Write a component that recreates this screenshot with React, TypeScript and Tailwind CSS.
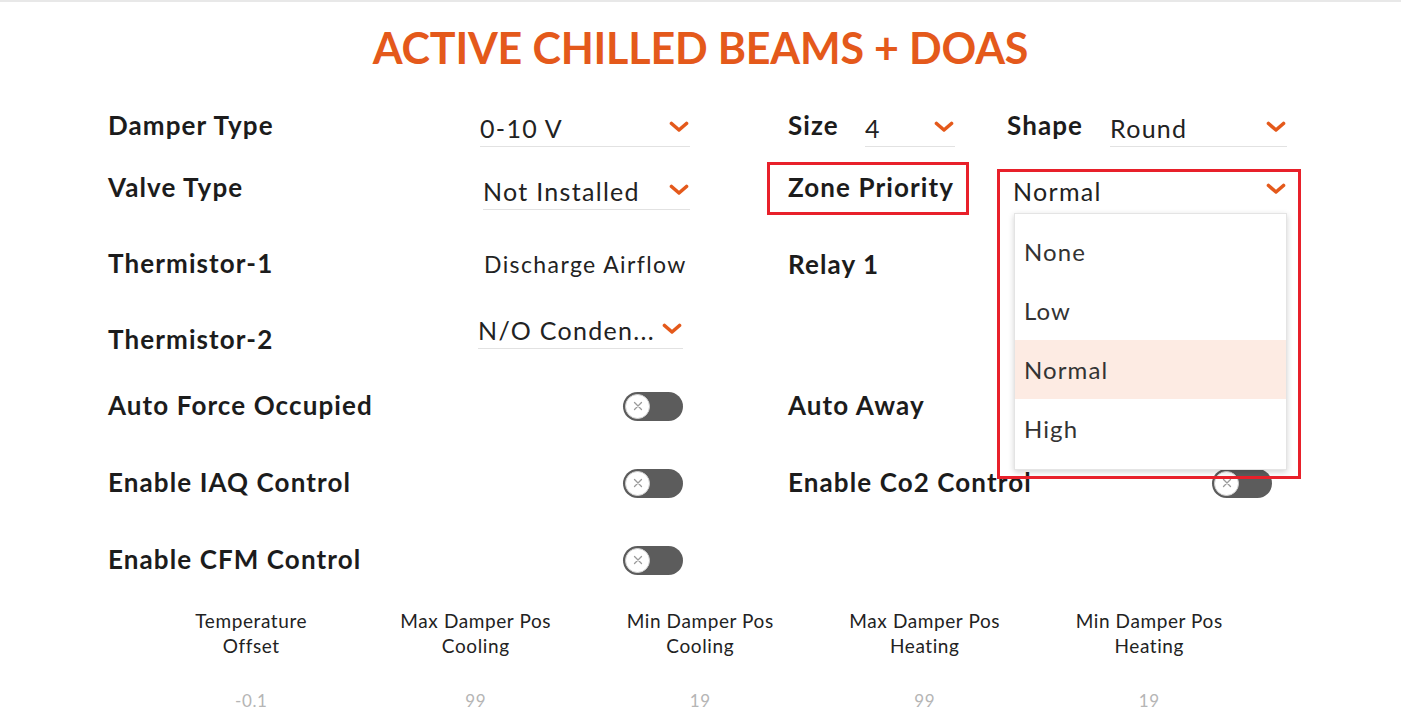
import React from "react";

const Chevron = () => (
  <svg width="20" height="12" viewBox="0 0 20 12" className="shrink-0">
    <polyline points="2.5,2.5 10,9 17.5,2.5" fill="none" stroke="#e4591b" strokeWidth="3.6" strokeLinecap="round" strokeLinejoin="round" />
  </svg>
);

const Select = ({
  text,
  w,
  extra = "",
  noLine = false,
}: {
  text: string;
  w: string;
  extra?: string;
  noLine?: boolean;
}) => (
  <div
    className={`flex items-center justify-between h-[40px] ${w} ${extra} ${noLine ? "" : "border-b border-[#e2e2e2]"}`}
  >
    <span className="text-[25px] tracking-[1.3px] text-[#222] leading-none pt-[4px] whitespace-nowrap">{text}</span>
    <span className="pr-[1px]">
      <Chevron />
    </span>
  </div>
);

const Toggle = () => (
  <div className="w-[60px] h-[29px] rounded-full bg-[#5c5c5c] flex items-center pl-[2px] shrink-0">
    <div className="w-[25px] h-[25px] rounded-full bg-white border border-[#d0d0d0] flex items-center justify-center">
      <svg width="10" height="10" viewBox="0 0 10 10">
        <path d="M1.5 1.5 L8.5 8.5 M8.5 1.5 L1.5 8.5" stroke="#9a9a9a" strokeWidth="1.3" strokeLinecap="round" />
      </svg>
    </div>
  </div>
);

const Label = ({ children }: { children: React.ReactNode }) => (
  <span className="text-[26px] font-bold tracking-[1.1px] text-[#1c1c1c] leading-none whitespace-nowrap">{children}</span>
);

export default function App() {
  return (
    <div
      className="relative w-[1401px] h-[728px] overflow-hidden bg-white border-t-2 border-[#e8e8e8]"
      style={{ fontFamily: "Lato, 'Open Sans', sans-serif" }}
    >
      <h1 className="text-center text-[43px] font-bold text-[#e4591b] leading-none pt-[24px] h-[94px] tracking-[-0.2px]">
        ACTIVE CHILLED BEAMS + DOAS
      </h1>

      <div className="pl-[108px]">
        {/* Row 1 */}
        <div className="flex items-center h-[60px]">
          <div className="w-[680px] flex items-center">
            <div className="w-[372px]"><Label>Damper Type</Label></div>
            <Select text="0-10 V" w="w-[210px]" extra="mt-[2px]" />
          </div>
          <div className="flex items-center">
            <div className="w-[77px]"><Label>Size</Label></div>
            <Select text="4" w="w-[90px]" extra="mt-[2px]" />
            <div className="w-[155px] pl-[52px]"><Label>Shape</Label></div>
            <Select text="Round" w="w-[177px]" extra="mt-[2px]" />
          </div>
        </div>
        {/* Row 2 */}
        <div className="flex items-center h-[64px]">
          <div className="w-[680px] flex items-center">
            <div className="w-[375px]"><Label>Valve Type</Label></div>
            <Select text="Not Installed" w="w-[207px]" extra="mt-[4px]" />
          </div>
          <div className="flex items-center">
            <div className="w-[225px]"><Label>Zone Priority</Label></div>
            <Select text="Normal" w="w-[274px]" noLine extra="mt-[2px]" />
          </div>
        </div>
        {/* Row 3 */}
        <div className="flex items-center h-[88px]">
          <div className="w-[680px] flex items-center">
            <div className="w-[376px]"><Label>Thermistor-1</Label></div>
            <span className="text-[23px] tracking-[1.4px] text-[#222] leading-none whitespace-nowrap">Discharge Airflow</span>
          </div>
          <Label>Relay 1</Label>
        </div>
        {/* Row 4 */}
        <div className="flex items-start h-[60px]">
          <div className="w-[680px] flex items-start h-full">
            <div className="w-[370px] mt-[18px]"><Label>Thermistor-2</Label></div>
            <Select text="N/O Conden..." w="w-[205px]" extra="mt-[1px]" />
          </div>
        </div>
        {/* Row 5 */}
        <div className="flex items-center h-[76px]">
          <div className="w-[680px] flex items-center">
            <div className="w-[515px]"><Label>Auto Force Occupied</Label></div>
            <Toggle />
          </div>
          <div className="flex items-center">
            <div className="w-[424px]"><Label>Auto Away</Label></div>
            <Toggle />
          </div>
        </div>
        {/* Row 6 */}
        <div className="flex items-center h-[78px]">
          <div className="w-[680px] flex items-center">
            <div className="w-[515px]"><Label>Enable IAQ Control</Label></div>
            <Toggle />
          </div>
          <div className="flex items-center">
            <div className="w-[424px]"><Label>Enable Co2 Control</Label></div>
            <Toggle />
          </div>
        </div>
        {/* Row 7 */}
        <div className="flex items-center h-[76px]">
          <div className="w-[680px] flex items-center">
            <div className="w-[515px]"><Label>Enable CFM Control</Label></div>
            <Toggle />
          </div>
        </div>
      </div>

      {/* Bottom settings */}
      <div className="pl-[139px] mt-[10px] grid grid-cols-[repeat(5,224.5px)]">
        {[
          ["Temperature", "Offset", "-0.1"],
          ["Max Damper Pos", "Cooling", "99"],
          ["Min Damper Pos", "Cooling", "19"],
          ["Max Damper Pos", "Heating", "99"],
          ["Min Damper Pos", "Heating", "19"],
        ].map(([a, b, v], i) => (
          <div key={i} className="flex flex-col items-center text-[19px] text-[#222] leading-[25px] tracking-[0.6px]">
            <span>{a}</span>
            <span>{b}</span>
            <span className="mt-[30px] text-[17px] text-[#b5b5b5]">{v}</span>
          </div>
        ))}
      </div>

      {/* Dropdown menu overlay */}
      <div className="absolute left-[1014px] top-[211px] w-[273px] bg-white border border-[#e4e4e4] shadow-[0_2px_6px_rgba(0,0,0,0.18)] pt-[8px] pb-[11px]">
        {["None", "Low", "Normal", "High"].map((o) => (
          <div
            key={o}
            className={`h-[59px] flex items-center pl-[9px] text-[24px] tracking-[1.1px] text-[#333] ${o === "Normal" ? "bg-[#fdebe3]" : ""}`}
          >
            {o}
          </div>
        ))}
      </div>

      {/* Annotation boxes */}
      <div className="absolute left-[767px] top-[160px] w-[202px] h-[53px] border-[3px] border-[#e8202a]" />
      <div className="absolute left-[997px] top-[167px] w-[304px] h-[310px] border-[3px] border-[#e8202a]" />
    </div>
  );
}
